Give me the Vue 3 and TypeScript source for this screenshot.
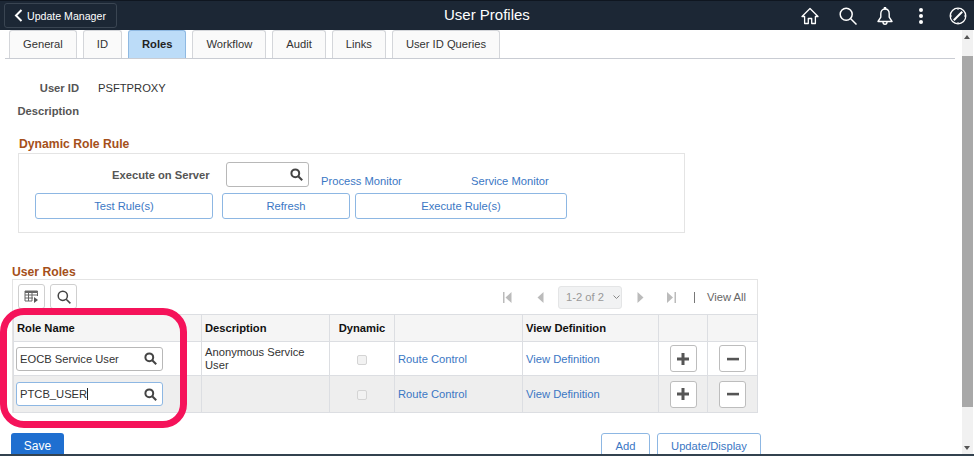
<script setup lang="ts">
const tabs = ['General', 'ID', 'Roles', 'Workflow', 'Audit', 'Links', 'User ID Queries']

const rows = [
  { role: 'EOCB Service User', description: 'Anonymous Service User', focused: false },
  { role: 'PTCB_USER', description: '', focused: true },
]
</script>

<template>
  <div class="page">
    <header class="banner">
      <button type="button" class="back-btn">
        <svg width="9" height="13" viewBox="0 0 9 13"><path d="M7.500 1 2 6.500 7.500 12" fill="none" stroke="#fff" stroke-width="2" /></svg>
        <span>Update Manager</span>
      </button>
      <h1 class="banner-title">User Profiles</h1>
      <nav class="banner-icons">
        <svg width="18" height="18" viewBox="0 0 18 18" fill="none" stroke="#fff" stroke-width="1.300" stroke-linejoin="round"><path d="M1 9.500 9 1.500l8 8h-2.600v7h-3.700v-5H7.300v5H3.600v-7z" /></svg>
        <svg width="18" height="18" viewBox="0 0 18 18" fill="none" stroke="#fff" stroke-width="1.500"><circle cx="7.200" cy="7.200" r="6" /><path d="m11.500 11.500 6 6" /></svg>
        <svg width="16" height="18" viewBox="0 0 16 18" fill="none" stroke="#fff" stroke-width="1.400" stroke-linejoin="round"><path d="M8 2C5.200 2 3.800 4.200 3.800 6.800v3.400L1 14.500h14l-2.800-4.300V6.800C12.200 4.200 10.800 2 8 2Z" /><path d="M6 15c0 1.500 1 2.200 2 2.200s2-.7 2-2.200" /><circle cx="8" cy="1.200" r=".7" fill="#fff" /></svg>
        <svg class="ic-dots" width="6" height="16" viewBox="0 0 6 16" fill="#fff"><circle cx="3" cy="2" r="2" /><circle cx="3" cy="8" r="2" /><circle cx="3" cy="14" r="2" /></svg>
        <svg class="ic-compass" width="18" height="18" viewBox="0 0 18 18" fill="none" stroke="#fff" stroke-width="1.300"><circle cx="9" cy="9" r="7.800" /><path d="m4.800 13.200 8.400-8.400" stroke-width="2" /><path d="M9 1.500v1.500M9 15v1.500M1.500 9H3M15 9h1.500" stroke-width="1" /></svg>
      </nav>
    </header>

    <div class="body-row">
      <main class="content">
        <div class="tabs">
          <span v-for="tab in tabs" :key="tab" class="tab" :class="{ active: tab === 'Roles' }">{{ tab }}</span>
        </div>

        <div class="info-row">
          <span class="info-label">User ID</span>
          <span class="info-value">PSFTPROXY</span>
        </div>
        <div class="info-row desc-row">
          <span class="info-label">Description</span>
        </div>

        <section class="rule-section">
          <h2 class="section-title rule-title">Dynamic Role Rule</h2>
          <div class="rule-box">
            <div class="server-row">
              <span class="server-label">Execute on Server</span>
              <span class="prompt server-prompt">
                <svg class="glass" width="13" height="13" viewBox="0 0 13 13" fill="none" stroke="#444" stroke-width="2"><circle cx="5.300" cy="5.300" r="3.900" /><path d="m8.200 8.200 4 4" /></svg>
              </span>
              <a class="link monitor-a">Process Monitor</a>
              <a class="link monitor-b">Service Monitor</a>
            </div>
            <div class="rule-buttons">
              <button type="button" class="btn btn-test">Test Rule(s)</button>
              <button type="button" class="btn btn-refresh">Refresh</button>
              <button type="button" class="btn btn-exec">Execute Rule(s)</button>
            </div>
          </div>
        </section>

        <section class="roles-section">
          <h2 class="section-title roles-title">User Roles</h2>
          <div class="grid-box">
            <div class="grid-toolbar">
              <button type="button" class="tool-btn">
                <svg width="15" height="14" viewBox="0 0 15 14" fill="none" stroke="#666" stroke-width="1"><path d="M1 1h12.500v1.500H1z" fill="#666" /><path d="M1 2.500V11h7M1 5h12.500M1 8h8M4.500 2.500V11M8 2.500V11M13.500 2.500V6" /><path d="m10 7 4 3-4 3z" fill="#555" stroke="none" /></svg>
              </button>
              <button type="button" class="tool-btn">
                <svg width="14" height="14" viewBox="0 0 14 14" fill="none" stroke="#444" stroke-width="1.500"><circle cx="5.800" cy="5.800" r="4.600" /><path d="m9.200 9.200 4.200 4.200" /></svg>
              </button>
              <div class="pager">
                <svg width="9" height="11" viewBox="0 0 9 11" fill="#bbb"><path d="M0 0h1.500v11H0zM8.500 0v11L2.500 5.500z" /></svg>
                <svg class="pg-prev" width="7" height="11" viewBox="0 0 7 11" fill="#bbb"><path d="M6.500 0v11L.5 5.500z" /></svg>
                <span class="pg-select">1-2 of 2
                  <svg width="7" height="5" viewBox="0 0 7 5" fill="none" stroke="#888"><path d="m.5.500 3 3 3-3" /></svg>
                </span>
                <svg class="pg-next" width="7" height="11" viewBox="0 0 7 11" fill="#bbb"><path d="M.5 0v11l6-5.500z" /></svg>
                <svg class="pg-last" width="9" height="11" viewBox="0 0 9 11" fill="#bbb"><path d="M7.500 0H9v11H7.500zM0 0v11l6-5.500z" /></svg>
                <span class="pg-sep"></span>
                <span class="pg-all">View All</span>
              </div>
            </div>

            <table class="roles-table">
              <colgroup>
                <col style="width: 188px" />
                <col style="width: 128px" />
                <col style="width: 65px" />
                <col style="width: 128px" />
                <col style="width: 136px" />
                <col style="width: 49px" />
                <col style="width: 50px" />
              </colgroup>
              <thead>
                <tr>
                  <th>Role Name</th>
                  <th>Description</th>
                  <th class="center">Dynamic</th>
                  <th></th>
                  <th>View Definition</th>
                  <th></th>
                  <th></th>
                </tr>
              </thead>
              <tbody>
                <tr v-for="row in rows" :key="row.role">
                  <td class="role-cell">
                    <span class="prompt role-prompt" :class="{ focused: row.focused }">
                      <span class="role-text" :class="{ caret: row.focused }">{{ row.role }}</span>
                      <svg class="glass" width="13" height="13" viewBox="0 0 13 13" fill="none" stroke="#444" stroke-width="2"><circle cx="5.300" cy="5.300" r="3.900" /><path d="m8.200 8.200 4 4" /></svg>
                    </span>
                  </td>
                  <td class="desc-cell">{{ row.description }}</td>
                  <td class="center"><span class="check"></span></td>
                  <td><a class="link">Route Control</a></td>
                  <td><a class="link">View Definition</a></td>
                  <td class="center">
                    <button type="button" class="icon-btn">
                      <svg width="14" height="14" viewBox="0 0 14 14" fill="#555"><path d="M5.500 1h3v4.500H13v3H8.500V13h-3V8.500H1v-3h4.500z" /></svg>
                    </button>
                  </td>
                  <td class="center">
                    <button type="button" class="icon-btn">
                      <svg width="14" height="14" viewBox="0 0 14 14" fill="#555"><path d="M1 5.800h12v2.600H1z" /></svg>
                    </button>
                  </td>
                </tr>
              </tbody>
            </table>
            <div class="highlight"></div>
          </div>
        </section>

        <div class="footer-row">
          <button type="button" class="btn-save">Save</button>
          <div class="footer-right">
            <button type="button" class="btn btn-add">Add</button>
            <button type="button" class="btn btn-update">Update/Display</button>
          </div>
        </div>
      </main>

      <aside class="scrollbar">
        <span class="arrow-up"></span>
        <span class="thumb"></span>
        <span class="arrow-down"></span>
      </aside>
    </div>
    <div class="bottom-line"></div>
  </div>
</template>

<style scoped>
.page {
  display: flex;
  flex-direction: column;
  font-family: 'Liberation Sans', Arial, sans-serif;
  height: 456px;
  overflow: hidden;
  width: 974px;
}

.banner {
  align-items: center;
  background: #1c2735;
  border-top: 1px solid #0f1620;
  box-sizing: border-box;
  display: flex;
  flex: none;
  height: 30px;
  padding-left: 4px;
  position: relative;
}

.back-btn {
  align-items: center;
  background: #1c2735;
  border: 1px solid #3a4552;
  border-radius: 3px;
  color: #fff;
  display: flex;
  font-family: inherit;
  font-size: 10.600px;
  gap: 4px;
  height: 25px;
  padding: 0 0 0 9px;
  white-space: nowrap;
  width: 113px;
}

.banner-title {
  color: #fff;
  font-size: 15px;
  font-weight: 400;
  left: 444px;
  margin: 0;
  position: absolute;
  top: 5px;
}

.banner-icons {
  align-items: center;
  display: flex;
  gap: 20px;
  margin-left: auto;
  margin-right: 7px;
}

.ic-dots,
.ic-compass {
  margin-left: 5px;
}

.body-row {
  display: flex;
  flex: 1;
  min-height: 0;
}

.content {
  flex: 1;
  min-width: 0;
  overflow: hidden;
  position: relative;
}

.tabs {
  border-bottom: 1px solid #c9ccd3;
  box-sizing: border-box;
  display: flex;
  gap: 6px;
  height: 29px;
  margin-left: 5px;
  margin-right: 7px;
  padding-left: 4px;
}

.tab {
  background: #fafafa;
  border: 1px solid #d4d6da;
  border-bottom: 0;
  border-radius: 3px 3px 0 0;
  color: #333;
  font-size: 11.200px;
  line-height: 27px;
  padding: 0 13px;
}

.tab.active {
  background: #bcdcf8;
  border-color: #8fb9e2;
  color: #222;
  font-weight: 700;
}

.info-row {
  align-items: center;
  display: flex;
  font-size: 11.200px;
  gap: 19px;
  line-height: 13px;
  margin-top: 23px;
}

.desc-row {
  margin-top: 10px;
}

.info-label {
  color: #555;
  font-weight: 700;
  text-align: right;
  width: 79px;
}

.info-value {
  color: #333;
}

.rule-section {
  margin-left: 18px;
  margin-top: 19px;
}

.section-title {
  color: #a5501a;
  font-size: 12.200px;
  font-weight: 700;
  line-height: 15px;
  margin: 0;
}

.rule-title {
  padding-left: 1px;
}

.rule-box {
  border: 1px solid #e4e4e4;
  box-sizing: border-box;
  height: 80px;
  margin-top: 1px;
  width: 667px;
}

.server-row {
  height: 32px;
  position: relative;
}

.server-label {
  color: #555;
  font-size: 11.200px;
  font-weight: 700;
  left: 93px;
  position: absolute;
  top: 15px;
}

.server-prompt {
  height: 25px;
  left: 207px;
  position: absolute;
  top: 8px;
  width: 83px;
}

.monitor-a {
  left: 302px;
  position: absolute;
  top: 21px;
}

.monitor-b {
  left: 452px;
  position: absolute;
  top: 21px;
}

.rule-buttons {
  display: flex;
  gap: 5px;
  margin-top: 7px;
  padding-left: 16px;
}

.btn {
  background: #fff;
  border: 1px solid #8db7e3;
  border-radius: 3px;
  color: #3b77c4;
  font-family: inherit;
  font-size: 11.200px;
  height: 26px;
  padding: 0 0 1px;
}

.btn-test {
  margin-right: 4px;
  width: 178px;
}

.btn-refresh {
  width: 128px;
}

.btn-exec {
  width: 212px;
}

.link {
  color: #3b77c4;
  font-size: 11.200px;
}

.prompt {
  align-items: center;
  background: #fff;
  border: 1px solid #b8b8b8;
  border-radius: 3px;
  box-sizing: border-box;
  display: flex;
  justify-content: flex-end;
  padding-right: 5px;
}

.glass {
  flex: none;
}

.roles-section {
  margin-left: 12px;
  margin-top: 32px;
}

.roles-title {
  line-height: 14px;
}

.grid-box {
  border: 1px solid #e4e4e4;
  border-bottom: 0;
  box-sizing: border-box;
  position: relative;
  width: 746px;
}

.grid-toolbar {
  align-items: center;
  display: flex;
  gap: 5px;
  height: 34px;
  padding-left: 5px;
}

.tool-btn {
  align-items: center;
  align-self: flex-start;
  background: #fff;
  border: 1px solid #cfcfcf;
  border-radius: 3px;
  display: flex;
  height: 25px;
  justify-content: center;
  margin-top: 4px;
  padding: 0;
  width: 27px;
}

.pager {
  align-items: center;
  color: #aaa;
  display: flex;
  font-size: 11.200px;
  margin-left: auto;
  padding-right: 11px;
}

.pg-prev {
  margin-left: 25px;
  margin-right: 14px;
}

.pg-select {
  align-items: center;
  background: #f1f2f3;
  border: 1px solid #e4e5e6;
  border-radius: 3px;
  box-sizing: border-box;
  color: #999;
  display: flex;
  gap: 9px;
  height: 23px;
  padding-left: 7px;
  width: 64px;
}

.pg-next {
  margin-left: 15px;
}

.pg-last {
  margin-left: 23px;
}

.pg-sep {
  background: #777;
  height: 11px;
  margin-left: 18px;
  width: 1px;
}

.pg-all {
  color: #666;
  margin-left: 12px;
}

.roles-table {
  border-collapse: collapse;
  font-size: 11.200px;
  table-layout: fixed;
  width: 744px;
}

.roles-table th {
  background: #f5f5f5;
  border: 1px solid #dcdee2;
  color: #111;
  font-weight: 700;
  height: 26px;
  padding: 0 3px;
  text-align: left;
}

.roles-table td {
  border: 1px solid #dcdee2;
  color: #333;
  height: 33px;
  padding: 0 3px;
}

.roles-table tbody tr:nth-child(2) td {
  background: #eeeeee;
  height: 36px;
}

.roles-table .center {
  text-align: center;
}

.roles-table .role-cell {
  padding-left: 2px;
}

.desc-cell {
  line-height: 13px;
}

.role-prompt {
  height: 24px;
  justify-content: space-between;
  padding-left: 3px;
  width: 147px;
}

.role-prompt.focused {
  border-color: #8db7e3;
}

.role-text {
  color: #333;
}

.role-text.caret {
  border-right: 1px solid #222;
}

.check {
  background: #f2f2f2;
  border: 1px solid #d4d4d4;
  border-radius: 2px;
  box-sizing: border-box;
  display: inline-block;
  height: 10px;
  vertical-align: middle;
  width: 10px;
}

.icon-btn {
  align-items: center;
  background: #fff;
  border: 1px solid #bdbdbd;
  border-radius: 3px;
  display: inline-flex;
  height: 27px;
  justify-content: center;
  padding: 0;
  vertical-align: middle;
  width: 27px;
}

.highlight {
  border: 7px solid #f5135a;
  border-radius: 24px;
  box-sizing: border-box;
  height: 120px;
  left: -13px;
  pointer-events: none;
  position: absolute;
  top: 28px;
  width: 187px;
}

.footer-row {
  align-items: flex-start;
  display: flex;
  margin-left: 11px;
  margin-top: 20px;
  width: 750px;
}

.btn-save {
  background: #1f6fd0;
  border: 0;
  border-radius: 3px 3px 0 0;
  color: #fff;
  flex: none;
  font-family: inherit;
  font-size: 12px;
  height: 26px;
  width: 53px;
}

.footer-right {
  display: flex;
  gap: 7px;
  margin-left: auto;
}

.btn-add {
  width: 49px;
}

.btn-update {
  width: 104px;
}

.scrollbar {
  background: #f1f1f1;
  flex: none;
  margin-right: 1px;
  position: relative;
  width: 11px;
}

.arrow-up {
  border-bottom: 4px solid #555;
  border-left: 3.500px solid transparent;
  border-right: 3.500px solid transparent;
  left: 2px;
  position: absolute;
  top: 5px;
}

.arrow-down {
  border-left: 3.500px solid transparent;
  border-right: 3.500px solid transparent;
  border-top: 4px solid #555;
  bottom: 4px;
  left: 2px;
  position: absolute;
}

.thumb {
  background: #a8a8a8;
  height: 351px;
  left: 0;
  position: absolute;
  right: 0;
  top: 26px;
}

.bottom-line {
  background: #33424f;
  flex: none;
  height: 2px;
}
</style>
